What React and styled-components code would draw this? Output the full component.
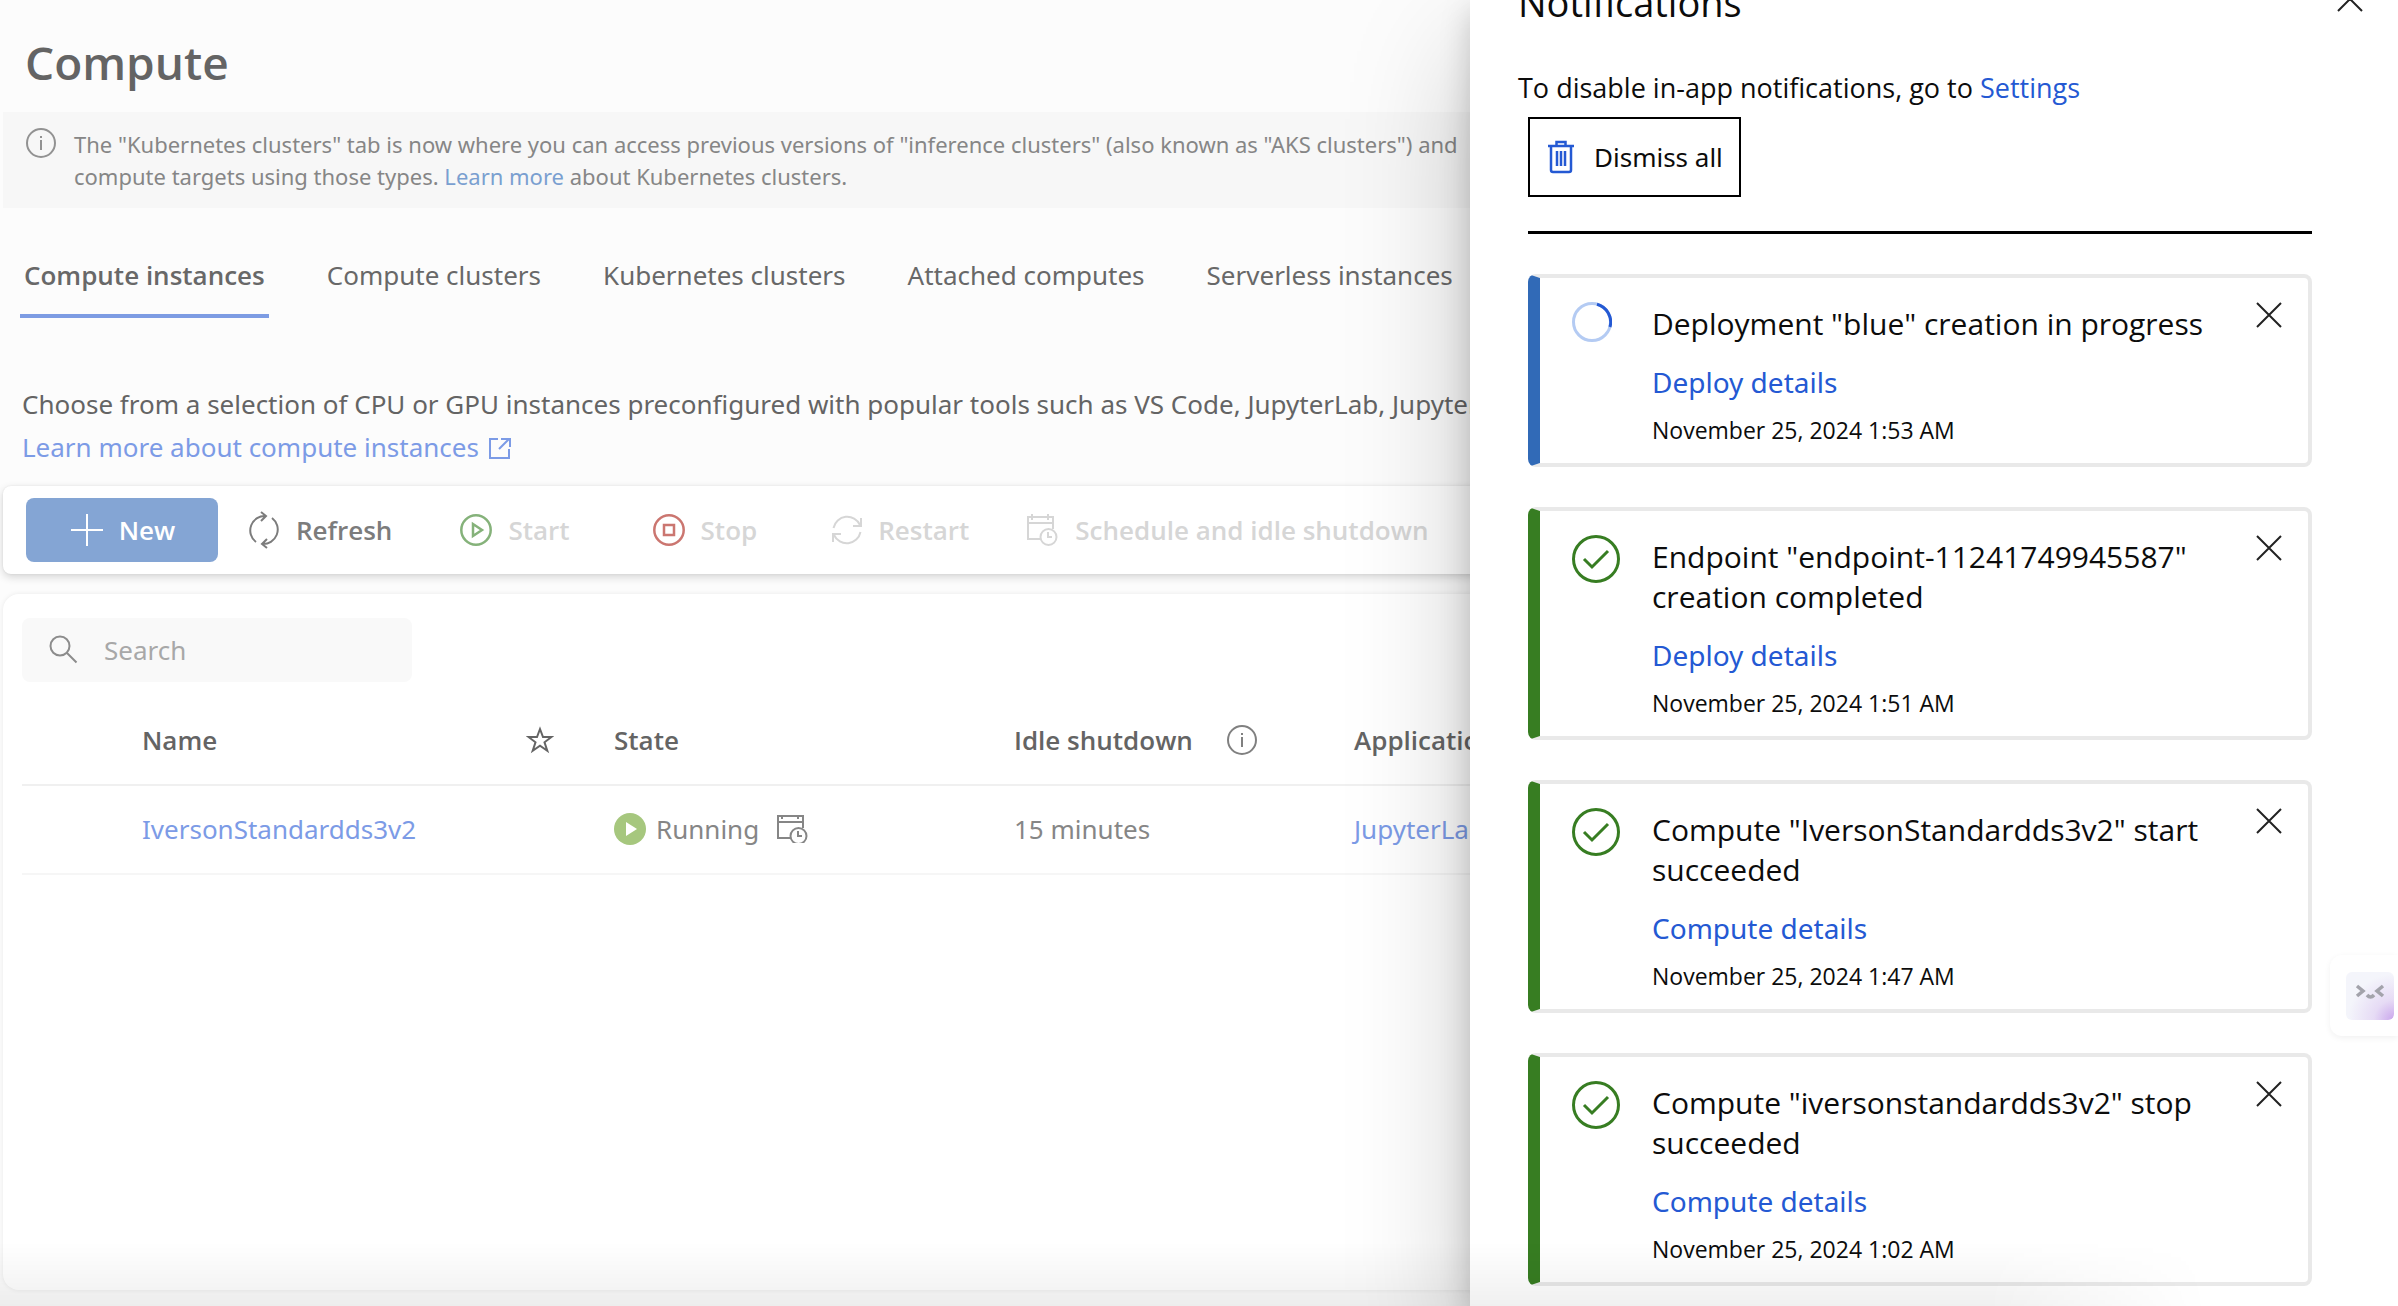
import React from 'react';
import styled, { createGlobalStyle } from 'styled-components';

const Global = createGlobalStyle`
  *, *::before, *::after { box-sizing: border-box; }
  html, body, #root { height: 100%; }
  body {
    margin: 0;
    overflow: hidden;
    background: #fcfcfc;
    color: #646464;
    font-family: "Noto Sans", "Open Sans", sans-serif;
    font-size: 26px;
    line-height: 40px;
  }
  button, input { font: inherit; color: inherit; }
  h1, h2, h3, p { margin: 0; font-weight: 400; }
`;

const strong = '"Open Sans", "Noto Sans", sans-serif';

const Shell = styled.div`
  position: relative;
  height: 100vh;
  overflow: hidden;
`;

const Page = styled.main`
  display: flex;
  flex-direction: column;
  height: 100%;
  padding: 30px 0 16px 3px;
`;

const Title = styled.h1`
  padding-left: 22px;
  font-family: ${strong};
  font-size: 46px;
  line-height: 64px;
  font-weight: 600;
`;

const Banner = styled.section`
  display: flex;
  gap: 18px;
  margin-top: 18px;
  padding: 16px 23px;
  background: #f7f7f7;
  color: #868686;
  font-size: 22px;
  line-height: 32px;
`;

const BannerText = styled.p`
  white-space: nowrap;
`;

const Link = styled.a`
  color: ${(p) => p.$tone || '#7c9be6'};
  text-decoration: none;
`;

const Tabs = styled.nav`
  display: flex;
  gap: 54px;
  margin-top: 44px;
  padding-left: 17px;
`;

const Tab = styled.a`
  padding: 3px 4px 19px;
  border-bottom: 4px solid ${(p) => (p.$active ? '#7d9ce3' : 'transparent')};
  color: #686868;
  font-family: ${(p) => (p.$active ? strong : 'inherit')};
  font-weight: ${(p) => (p.$active ? 600 : 400)};
  text-decoration: none;
  white-space: nowrap;
`;

const Intro = styled.div`
  margin-top: 65px;
  padding-left: 19px;
  line-height: 43px;
  white-space: nowrap;
  a { display: inline-flex; align-items: center; gap: 10px; }
`;

const Toolbar = styled.div`
  display: flex;
  flex: none;
  align-items: center;
  margin-top: 17px;
  padding: 12px 23px;
  border-radius: 8px;
  background: #fff;
  box-shadow: 0 3px 8px rgba(0, 0, 0, 0.16), 0 0 2px rgba(0, 0, 0, 0.08);
`;

const Tool = styled.button`
  display: flex;
  align-items: center;
  gap: 16px;
  height: 64px;
  padding: 0 ${(p) => p.$after}px 0 0;
  border: 0;
  background: none;
  color: ${(p) => (p.disabled ? '#d6d6d6' : '#7c7c7c')};
  font-family: ${strong};
  font-weight: 600;
  white-space: nowrap;
  svg { flex: none; }
`;

const PrimaryTool = styled(Tool)`
  justify-content: center;
  width: 192px;
  margin-right: 30px;
  padding-left: 2px;
  border-radius: 8px;
  background: #84a5d4;
  color: #fff;
`;

const Panel = styled.section`
  flex: 1;
  margin-top: 20px;
  padding: 24px 19px;
  border-radius: 16px;
  background: #fff;
  box-shadow: 0 0 5px rgba(0, 0, 0, 0.08);
`;

const SearchBox = styled.label`
  display: flex;
  align-items: center;
  gap: 25px;
  width: 390px;
  height: 64px;
  padding-left: 27px;
  border-radius: 8px;
  background: #f9f9f9;
  color: #8c8c8c;
  input {
    width: 240px;
    padding: 0;
    border: 0;
    outline: 0;
    background: none;
  }
  input::placeholder { color: #a8a8a8; opacity: 1; }
`;

const Table = styled.table`
  width: 100%;
  margin-top: 14px;
  border-collapse: collapse;
  table-layout: fixed;
  text-align: left;
  white-space: nowrap;
  th, td { padding: 0; height: 89px; }
  th {
    border-bottom: 2px solid #f0f0f0;
    font-family: ${strong};
    font-weight: 600;
  }
  td {
    padding-bottom: 2px;
    border-bottom: 2px solid #f6f6f6;
    color: #868686;
  }
  svg { display: block; flex: none; }
`;

const Col = styled.col`
  width: ${(p) => p.$w}px;
`;

const Cell = styled.div`
  display: flex;
  align-items: center;
  gap: ${(p) => p.$gap}px;
`;

const Drawer = styled.aside`
  position: absolute;
  top: 0;
  right: 0;
  bottom: 0;
  width: 928px;
  overflow: hidden;
  padding: 0 86px 0 58px;
  background: #fff;
  color: #0c0c0c;
  box-shadow: 0 51px 115px rgba(0, 0, 0, 0.22), 0 10px 29px rgba(0, 0, 0, 0.18);
`;

const DrawerHead = styled.header`
  display: flex;
  align-items: center;
  justify-content: space-between;
  height: 56px;
  margin: -26px -51px 0 -10px;
  svg { display: block; margin-bottom: 6px; }
  h2 { font-family: ${strong}; font-size: 38px; font-weight: 500; }
`;

const Hint = styled.p`
  margin: 38px 0 0 -10px;
  font-family: ${strong};
  font-size: 27px;
`;

const IconButton = styled.button`
  display: flex;
  flex: none;
  padding: 0;
  border: 0;
  background: none;
`;

const Dismiss = styled.button`
  display: flex;
  align-items: center;
  gap: 20px;
  height: 80px;
  margin-top: 9px;
  padding: 0 16px 0 18px;
  border: 2px solid #000;
  background: #fff;
`;

const Rule = styled.hr`
  height: 3px;
  margin: 34px 0 40px;
  border: 0;
  background: #000;
`;

const Stack = styled.div`
  display: flex;
  flex-direction: column;
  gap: 40px;
`;

const Card = styled.article`
  display: flex;
  align-items: flex-start;
  padding: 24px 26px 13px 32px;
  border: 4px solid #e9e9e9;
  border-left: 12px solid ${(p) => (p.$busy ? '#316ab7' : '#377d22')};
  border-radius: 8px;
`;

const Status = styled.div`
  flex: none;
  width: 80px;
  svg { display: block; }
`;

const CardBody = styled.div`
  flex: 1;
  padding-top: 2px;
  font-family: ${strong};
  h3 { font-size: 30px; }
  p { font-size: 23px; margin-top: 8px; }
`;

const CardLink = styled(Link)`
  display: block;
  margin-top: 18px;
  font-family: "Noto Sans", "Open Sans", sans-serif;
  font-size: 28px;
`;

const Assistant = styled.button`
  position: absolute;
  top: 955px;
  right: 0;
  display: flex;
  align-items: center;
  width: 68px;
  height: 81px;
  padding: 0 0 0 16px;
  border: 0;
  border-radius: 12px 0 0 12px;
  background: #fff;
  box-shadow: 0 2px 6px rgba(0, 0, 0, 0.06);
`;

const Face = styled.span`
  display: flex;
  width: 48px;
  height: 48px;
  border-radius: 6px;
  background: radial-gradient(circle at 100% 100%, #c9a6ec 0, #e6dbf5 20px, #f4f5fb 46px);
`;

const BottomShade = styled.div`
  position: absolute;
  left: 0;
  right: 190px;
  bottom: 0;
  height: 64px;
  pointer-events: none;
  background: linear-gradient(rgba(0, 0, 0, 0), rgba(0, 0, 0, 0.06));
  mask-image: linear-gradient(to right, #000 90%, transparent);
`;

const Svg = ({ w, h = w, box = `0 0 ${w} ${h}`, stroke = 'currentColor', sw = 2, children }) => (
  <svg width={w} height={h} viewBox={box} fill="none" stroke={stroke} strokeWidth={sw} aria-hidden="true">
    {children}
  </svg>
);

const InfoIcon = ({ color = '#929292' }) => (
  <Svg w={30} stroke={color}>
    <circle cx="15" cy="15" r="14" />
    <path d="M15 12v10M15 8v2" />
  </Svg>
);

const ExternalIcon = () => (
  <Svg w={22}>
    <path d="M9 2H1v19h19v-9M12 2h9v8M20 2 10 12" />
  </Svg>
);

const RefreshIcon = () => (
  <Svg w={32} h={38}>
    <path d="M8 31A14.500 14.500 0 0 1 18 5M13 1l5 4-5 5M24 7A14.500 14.500 0 0 1 14 33M19 28l-5 5 5 4" />
  </Svg>
);

const StartIcon = () => (
  <Svg w={32} stroke="#85b27a" sw={2.500}>
    <circle cx="16" cy="16" r="14.700" />
    <path d="M13 10v12l9-6z" />
  </Svg>
);

const StopIcon = () => (
  <Svg w={32} stroke="#cb7670" sw={2.500}>
    <circle cx="16" cy="16" r="14.700" />
    <path d="M11 11h10v10H11z" />
  </Svg>
);

const RestartIcon = () => (
  <Svg w={30}>
    <path d="M1.500 13A14 14 0 0 1 28 10M29 3v8h-8M28.500 17A14 14 0 0 1 2 20M1 27v-8h8" />
  </Svg>
);

const ScheduleIcon = ({ compact }) => (
  <Svg w={32} h={compact ? 28 : 32} box={compact ? '0 2 32 28' : '0 0 32 32'}>
    <path d="M13 25H1V3h25v12M1 9h25M5 0v6M21 0v6" />
    <circle cx="21.500" cy="23" r="8" />
    <path d="M21 18v5h4" />
  </Svg>
);

const SearchIcon = () => (
  <Svg w={30}>
    <circle cx="11" cy="11" r="9.500" />
    <path d="m18 18 9.500 9.500" />
  </Svg>
);

const StarIcon = () => (
  <Svg w={28}>
    <path d="m14 3 3 8h8.500l-7 5.300 2.800 8.500L14 19.700l-7.300 5.100 2.800-8.500-7-5.300H11z" />
  </Svg>
);

const RunningIcon = () => (
  <Svg w={32} stroke="none">
    <circle cx="16" cy="16" r="16" fill="#a6c77e" />
    <path d="M12 9v14l11-7z" fill="#fff" />
  </Svg>
);

const TrashIcon = () => (
  <Svg w={26} h={34} stroke="#2459d3" sw={2.500}>
    <path d="M0 6h26M8.500 6V2h9v4M3 6v24q0 2 2 2h16q2 0 2-2V6M9 11v15M13 11v15M17 11v15" />
  </Svg>
);

const CrossIcon = () => (
  <Svg w={26} stroke="#222">
    <path d="m1 1 24 24M25 1 1 25" />
  </Svg>
);

const CheckIcon = () => (
  <Svg w={48} stroke="#377d22" sw={3}>
    <circle cx="24" cy="24" r="22.500" />
    <path d="m12 24 8 8 16-16" />
  </Svg>
);

const SpinnerIcon = () => (
  <Svg w={40} stroke="#b4cbf3" sw={3}>
    <circle cx="20" cy="20" r="18.500" />
    <path d="M25 2.200A18.500 18.500 0 0 1 38 25" stroke="#2459d3" />
  </Svg>
);

const tabs = ['Compute instances', 'Compute clusters', 'Kubernetes clusters', 'Attached computes', 'Serverless instances'];

const tools = [
  { label: 'Refresh', Icon: RefreshIcon, after: 68, on: true },
  { label: 'Start', Icon: StartIcon, after: 83 },
  { label: 'Stop', Icon: StopIcon, after: 75 },
  { label: 'Restart', Icon: RestartIcon, after: 58 },
  { label: 'Schedule and idle shutdown', Icon: ScheduleIcon, after: 0 },
];

const notices = [
  { title: 'Deployment "blue" creation in progress', link: 'Deploy details', time: '1:53 AM', busy: true },
  { title: 'Endpoint "endpoint-11241749945587" creation completed', link: 'Deploy details', time: '1:51 AM' },
  { title: 'Compute "IversonStandardds3v2" start succeeded', link: 'Compute details', time: '1:47 AM' },
  { title: 'Compute "iversonstandardds3v2" stop succeeded', link: 'Compute details', time: '1:02 AM' },
];

export default function App() {
  return (
    <Shell>
      <Global />
      <Page>
        <Title>Compute</Title>
        <Banner>
          <InfoIcon />
          <BannerText>
            The "Kubernetes clusters" tab is now where you can access previous versions of "inference clusters" (also known as "AKS clusters") and
            <br />
            compute targets using those types. <Link href="#kubernetes" $tone="#7a9fd0">Learn more</Link> about Kubernetes clusters.
          </BannerText>
        </Banner>
        <Tabs>
          {tabs.map((t, i) => (
            <Tab key={t} href="#tab" $active={i === 0}>{t}</Tab>
          ))}
        </Tabs>
        <Intro>
          <p>Choose from a selection of CPU or GPU instances preconfigured with popular tools such as VS Code, JupyterLab, Jupyter</p>
          <Link href="#learn">Learn more about compute instances <ExternalIcon /></Link>
        </Intro>
        <Toolbar>
          <PrimaryTool $after={0}>
            <Svg w={32}><path d="M16 0v32M0 16h32" /></Svg>
            New
          </PrimaryTool>
          {tools.map(({ label, Icon, after, on }) => (
            <Tool key={label} disabled={!on} $after={after}><Icon />{label}</Tool>
          ))}
        </Toolbar>
        <Panel>
          <SearchBox>
            <SearchIcon />
            <input type="text" placeholder="Search" aria-label="Search" />
          </SearchBox>
          <Table>
            <colgroup>
              <Col $w={120} />
              <Col $w={384} />
              <Col $w={88} />
              <Col $w={400} />
              <Col $w={340} />
              <col />
            </colgroup>
            <thead>
              <tr>
                <th />
                <th>Name</th>
                <th><StarIcon /></th>
                <th>State</th>
                <th><Cell $gap={34}>Idle shutdown <InfoIcon color="#808080" /></Cell></th>
                <th>Applications</th>
              </tr>
            </thead>
            <tbody>
              <tr>
                <td />
                <td><Link href="#instance">IversonStandardds3v2</Link></td>
                <td />
                <td>
                  <Cell $gap={18}>
                    <Cell $gap={10}><RunningIcon />Running</Cell>
                    <ScheduleIcon compact />
                  </Cell>
                </td>
                <td>15 minutes</td>
                <td><Link href="#lab">JupyterLab</Link></td>
              </tr>
            </tbody>
          </Table>
        </Panel>
      </Page>
      <Drawer aria-label="Notifications">
        <DrawerHead>
          <h2>Notifications</h2>
          <IconButton aria-label="Close"><CrossIcon /></IconButton>
        </DrawerHead>
        <Hint>To disable in-app notifications, go to <Link href="#settings" $tone="#2459d3">Settings</Link></Hint>
        <Dismiss><TrashIcon />Dismiss all</Dismiss>
        <Rule />
        <Stack>
          {notices.map((n) => (
            <Card key={n.time} $busy={n.busy}>
              <Status>{n.busy ? <SpinnerIcon /> : <CheckIcon />}</Status>
              <CardBody>
                <h3>{n.title}</h3>
                <CardLink href="#details" $tone="#2459d3">{n.link}</CardLink>
                <p>November 25, 2024 {n.time}</p>
              </CardBody>
              <IconButton aria-label="Dismiss"><CrossIcon /></IconButton>
            </Card>
          ))}
        </Stack>
      </Drawer>
      <BottomShade />
      <Assistant aria-label="Assistant">
        <Face>
          <Svg w={48} stroke="#a3a3ab" sw={3.500}>
            <path d="m11 14 6 5-6 5M37 14l-6 5 6 5M21 23q3.500 4 7 0" />
          </Svg>
        </Face>
      </Assistant>
    </Shell>
  );
}
